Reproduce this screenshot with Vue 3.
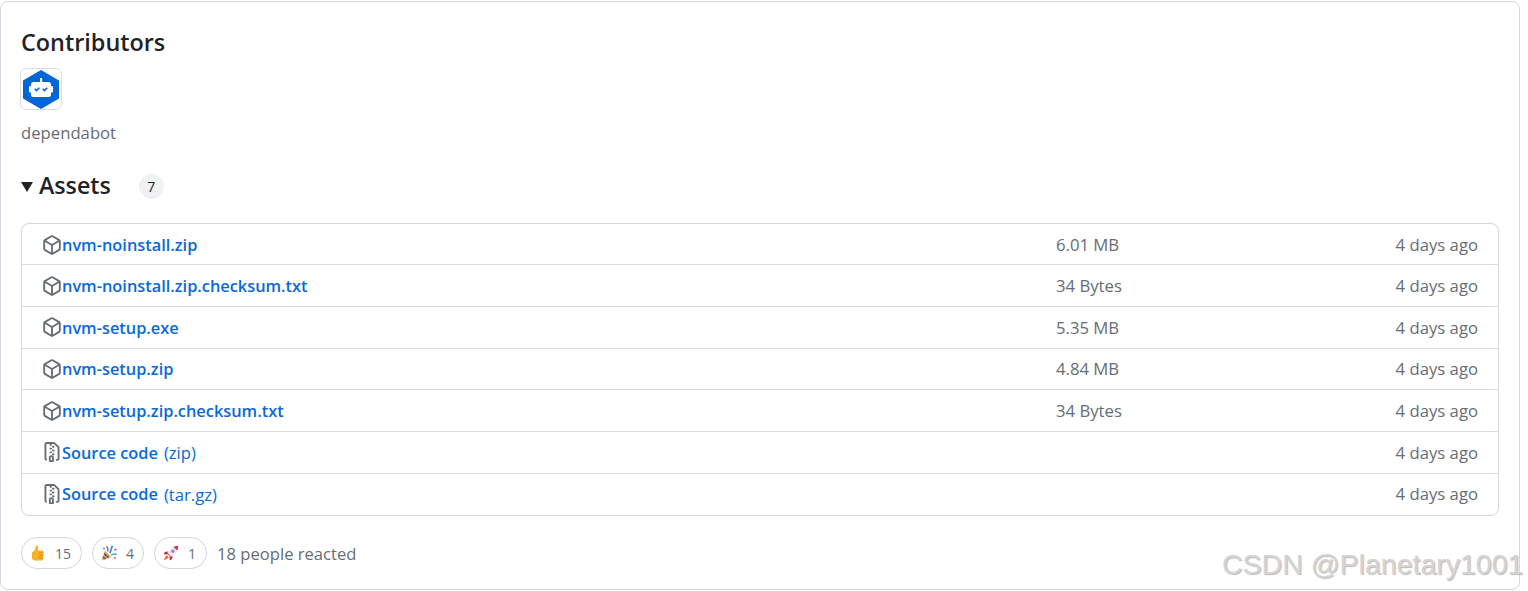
<template>
  <div class="page">
    <section class="release-card">
      <h2 class="heading">Contributors</h2>
      <div class="avatar">
        <svg width="40" height="40" viewBox="0 0 40 40" aria-hidden="true">
          <path d="M20 1 38 11.5V29.5L20 40 2 29.5V11.5Z" fill="#0366d6" />
          <path d="M19 9h2.200v4.500H19Z" fill="#fff" />
          <rect x="10" y="13" width="20" height="15" rx="2.500" fill="#fff" />
          <rect x="8" y="17" width="24" height="6.500" rx="1.200" fill="#fff" />
          <path d="M13.800 19.800l1.700 1.700 2.800-2.800M21.700 19.800l1.700 1.700 2.800-2.800" fill="none" stroke="#0366d6" stroke-width="1.600" />
        </svg>
      </div>
      <div class="contributor">dependabot</div>

      <div class="assets-head">
        <span class="caret"></span>
        <h3 class="assets-title">Assets</h3>
        <span class="counter">7</span>
      </div>

      <div class="assets">
        <div v-for="asset in assets" :key="asset.name + asset.suffix" class="asset-row">
          <div class="asset-name">
            <svg v-if="asset.kind === 'package'" class="octicon" width="20" height="20" viewBox="0 0 16 16" aria-hidden="true">
              <path d="m8.878.392 5.25 3.045c.54.314.872.89.872 1.514v6.098a1.75 1.75 0 0 1-.872 1.514l-5.25 3.045a1.75 1.75 0 0 1-1.756 0l-5.25-3.045A1.75 1.75 0 0 1 1 11.049V4.951c0-.624.332-1.201.872-1.514L7.122.392a1.75 1.75 0 0 1 1.756 0ZM7.875 1.69l-4.63 2.685L8 7.133l4.755-2.758-4.63-2.685a.248.248 0 0 0-.25 0ZM2.5 5.677v5.372c0 .09.047.171.125.216l4.625 2.683V8.432Zm6.25 8.271 4.625-2.683a.25.25 0 0 0 .125-.216V5.677L8.75 8.432Z" />
            </svg>
            <svg v-else class="octicon" width="20" height="20" viewBox="0 0 16 16" aria-hidden="true">
              <path d="M3.5 1.75v11.5c0 .09.048.173.126.217a.75.75 0 0 1-.752 1.298A1.748 1.748 0 0 1 2 13.25V1.75C2 .784 2.784 0 3.75 0h5.586c.464 0 .909.185 1.237.513l2.914 2.914c.329.328.513.773.513 1.237v8.586A1.75 1.75 0 0 1 12.25 15h-.5a.75.75 0 0 1 0-1.5h.5a.25.25 0 0 0 .25-.25V4.664a.25.25 0 0 0-.073-.177L9.513 1.573a.25.25 0 0 0-.177-.073H7.25a.75.75 0 0 1 0 1.5h-.5a.75.75 0 0 1 0-1.5h-3a.25.25 0 0 0-.25.25Zm3.75 8.75h.5c.966 0 1.75.784 1.75 1.75v3a.75.75 0 0 1-.75.75h-2.5a.75.75 0 0 1-.75-.75v-3c0-.966.784-1.75 1.75-1.75ZM6 5.25a.75.75 0 0 1 .75-.75h.5a.75.75 0 0 1 0 1.5h-.5A.75.75 0 0 1 6 5.25Zm.75 2.25h.5a.75.75 0 0 1 0 1.5h-.5a.75.75 0 0 1 0-1.5ZM8 6.75A.75.75 0 0 1 8.75 6h.5a.75.75 0 0 1 0 1.5h-.5A.75.75 0 0 1 8 6.75ZM8.75 3h.5a.75.75 0 0 1 0 1.5h-.5a.75.75 0 0 1 0-1.5ZM8 9.75A.75.75 0 0 1 8.75 9h.5a.75.75 0 0 1 0 1.5h-.5A.75.75 0 0 1 8 9.75Zm-1 2.5v2.25h1v-2.25a.25.25 0 0 0-.25-.25h-.5a.25.25 0 0 0-.25.25Z" />
            </svg>
            <a class="asset-link" href="#">{{ asset.name }}</a>
            <span v-if="asset.suffix" class="asset-suffix">{{ asset.suffix }}</span>
          </div>
          <div class="asset-size">{{ asset.size }}</div>
          <div class="asset-time">4 days ago</div>
        </div>
      </div>

      <div class="reactions">
        <button class="reaction">
          <svg width="16" height="16" viewBox="0 0 16 16" aria-hidden="true">
            <path d="M6.400.6c1.100-.3 1.900.5 1.800 1.600L7.900 5.600h4.200c1 0 1.500.8 1.400 1.700l-.4 6.600c-.1 1-.8 1.700-1.800 1.700H5.800c-2 0-3.900-.8-3.900-3.200V8.500c0-1.300 1.400-1.900 2.300-2.700C5.300 4.700 5.500 2.100 6.400.6Z" fill="#f7b125" />
            <path d="M8.600 8h4.800M8.600 10.400h4.700M8.600 12.900h4.400" stroke="#dd8b12" stroke-width=".9" fill="none" />
          </svg>
          <span>15</span>
        </button>
        <button class="reaction">
          <svg width="16" height="16" viewBox="0 0 16 16" aria-hidden="true">
            <path d="M.5 15.500 4 5.800 10.300 12Z" fill="#e0aa3a" />
            <path d="M1.800 11.800 4.500 14.200M3 8.500 7.600 12.800" stroke="#4d3f9e" stroke-width="1.300" fill="none" />
            <path d="M6.500 6.500C7.300 4.800 6.800 3 5.600 1.200" stroke="#e0457b" stroke-width="1.400" fill="none" />
            <path d="M8.800 8C10.300 5.800 9.800 3.500 11.500.8" stroke="#1f9ad6" stroke-width="1.700" fill="none" />
            <path d="M9.800 10.300c2-1.700 3.700-1.700 6-.8" stroke="#35b6c9" stroke-width="1.500" fill="none" />
            <path d="M13 4.200l2.300-.8.400 1.600-2.200.7Z" fill="#e0457b" />
            <circle cx="3" cy="3.500" r="1" fill="#1f9ad6" />
            <circle cx="14" cy="13" r=".9" fill="#e0457b" />
          </svg>
          <span>4</span>
        </button>
        <button class="reaction">
          <svg width="16" height="16" viewBox="0 0 16 16" aria-hidden="true">
            <path d="M5.500 6.500 1.800 7 .8 9.300l3.500.2ZM9.500 10.500 9 14.200l-2.300 1-.2-3.500Z" fill="#c8243f" />
            <path d="M3.800 10.200C2.500 11.200 1.800 13 .8 15.200 3 14.200 4.800 13.500 5.800 12.200Z" fill="#f0642c" />
            <path d="M15.300.7C11.800.8 8.300 2.400 6.200 5.200L4 8.600 7.400 12l3.400-2.200C13.600 7.700 15.200 4.200 15.300.7Z" fill="#ece9f0" />
            <path d="M15.300.7c-1.700 0-3.300.4-4.800 1.200l3.600 3.600c.8-1.500 1.200-3.100 1.200-4.800Z" fill="#dc2c52" />
            <circle cx="9.800" cy="6.200" r="1.700" fill="#8a90ad" />
            <path d="M4.600 8 8 11.400 7.400 12 4 8.600Z" fill="#dc2c52" />
          </svg>
          <span>1</span>
        </button>
        <span class="reacted">18 people reacted</span>
      </div>
    </section>
    <div class="watermark">CSDN @Planetary1001</div>
  </div>
</template>

<script setup>
const assets = [
  { name: 'nvm-noinstall.zip', suffix: '', size: '6.01 MB', kind: 'package' },
  { name: 'nvm-noinstall.zip.checksum.txt', suffix: '', size: '34 Bytes', kind: 'package' },
  { name: 'nvm-setup.exe', suffix: '', size: '5.35 MB', kind: 'package' },
  { name: 'nvm-setup.zip', suffix: '', size: '4.84 MB', kind: 'package' },
  { name: 'nvm-setup.zip.checksum.txt', suffix: '', size: '34 Bytes', kind: 'package' },
  { name: 'Source code', suffix: '(zip)', size: '', kind: 'zip' },
  { name: 'Source code', suffix: '(tar.gz)', size: '', kind: 'zip' }
]
</script>

<style scoped>
.page {
  position: relative;
  width: 1528px;
  height: 591px;
  overflow: hidden;
  background: #fff;
  font-family: "Open Sans", "Noto Sans", sans-serif;
  color: #1f2328;
}
.release-card {
  box-sizing: border-box;
  width: 1520px;
  height: 589px;
  margin-top: 1px;
  padding: 22px 20px 0 20px;
  border: 1px solid #d0d7de;
  border-radius: 8px;
}
.heading {
  margin: 0;
  font-size: 23.400px;
  font-weight: 600;
  line-height: 36px;
}
.avatar {
  box-sizing: border-box;
  width: 42px;
  height: 42px;
  margin-top: 8px;
  margin-left: -1px;
  display: flex;
  align-items: center;
  justify-content: center;
  border: 1px solid #d8dee4;
  border-radius: 6px;
}
.contributor {
  margin-top: 11px;
  font-size: 16.700px;
  line-height: 24px;
  color: #656d76;
}
.assets-head {
  display: flex;
  align-items: center;
  margin-top: 21px;
  height: 38px;
}
.caret {
  width: 0;
  height: 0;
  margin-top: 3px;
  border-left: 6px solid transparent;
  border-right: 6px solid transparent;
  border-top: 10px solid #1f2328;
}
.assets-title {
  margin: 0 0 0 6px;
  font-size: 23.200px;
  font-weight: 600;
  line-height: 36px;
}
.counter {
  display: flex;
  align-items: center;
  justify-content: center;
  width: 25px;
  height: 25px;
  margin-left: 28px;
  margin-top: 3px;
  border-radius: 50%;
  background: #eff1f3;
  font-size: 14px;
}
.assets {
  box-sizing: border-box;
  display: flex;
  flex-direction: column;
  width: 1478px;
  height: 293px;
  margin-top: 19px;
  border: 1px solid #d0d7de;
  border-radius: 8px;
}
.asset-row {
  box-sizing: border-box;
  flex: none;
  height: 41.670px;
  display: grid;
  grid-template-columns: 1014px 1fr auto;
  align-items: center;
  padding: 0 20px;
  font-size: 16.700px;
  color: #656d76;
}
.asset-row:first-child {
  height: 40.300px;
  padding-top: 1px;
}
.asset-row + .asset-row {
  border-top: 1px solid #d8dee4;
}
.asset-name {
  display: flex;
  align-items: center;
}
.octicon {
  flex: none;
  fill: #656d76;
}
.asset-link {
  padding-top: 1px;
  color: #0969da;
  font-size: 16.350px;
  font-weight: 600;
  text-decoration: none;
}
.asset-suffix {
  margin-left: 6px;
  padding-top: 1px;
  color: #0969da;
}
.reactions {
  display: flex;
  align-items: center;
  gap: 10px;
  margin-top: 21px;
}
.reaction {
  display: flex;
  align-items: center;
  gap: 9px;
  height: 32px;
  padding: 0 10px 0 8px;
  background: #fff;
  border: 1px solid #d0d7de;
  border-radius: 17px;
  font-family: inherit;
  font-size: 14px;
  color: #656d76;
}
.reaction:nth-child(2) {
  padding-right: 9px;
}
.reacted {
  padding-top: 1px;
  font-size: 16.600px;
  color: #656d76;
}
.watermark {
  position: absolute;
  left: 1222px;
  top: 546px;
  font-family: "Liberation Sans", Arial, sans-serif;
  font-size: 28.500px;
  line-height: 36px;
  white-space: nowrap;
  color: #d4d4d4;
  text-shadow: 1px 1px 1px #bbb;
}
</style>
